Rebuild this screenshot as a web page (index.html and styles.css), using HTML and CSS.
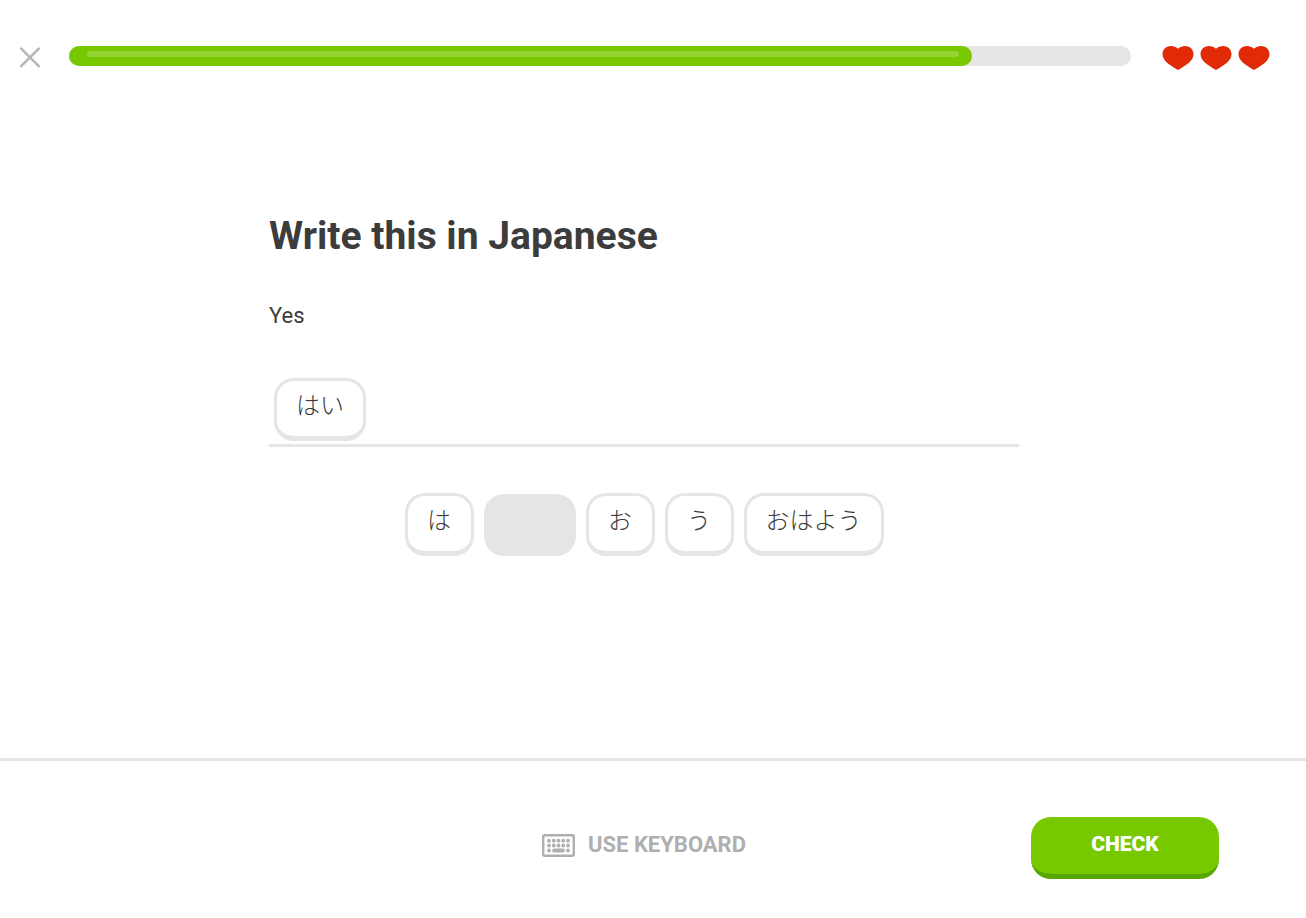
FILE: index.html
```html
<!DOCTYPE html>
<html lang="en">
<head>
<meta charset="utf-8">
<meta name="viewport" content="width=device-width, initial-scale=1">
<title>Write this in Japanese</title>
<link rel="stylesheet" href="styles.css">
</head>
<body>
<header class="topbar">
  <button class="close" type="button" aria-label="Close">
    <svg width="22" height="22" viewBox="0 0 22 22" fill="none" stroke="#b7b7b7" stroke-width="2.6" stroke-linecap="round"><path d="M2.200 2.600 19.800 20.200M19.800 2.600 2.200 20.200"/></svg>
  </button>
  <div class="progress" role="progressbar" aria-label="Lesson progress" aria-valuenow="85" aria-valuemin="0" aria-valuemax="100">
    <div class="progress-fill" style="width: 85%"><div class="progress-shine"></div></div>
  </div>
  <div class="hearts" role="img" aria-label="3 hearts">
    <svg class="heart" viewBox="0 0 32 24"><path d="M16 2.700C18 .8 20.500 0 23 0C28.500 0 31.500 4 31.500 8.200C31.500 14.500 24.500 19 16 24C7.500 19 .5 14.500 .5 8.200C.5 4 3.500 0 9 0C11.500 0 14 .8 16 2.700Z"/></svg>
    <svg class="heart" viewBox="0 0 32 24"><path d="M16 2.700C18 .8 20.500 0 23 0C28.500 0 31.500 4 31.500 8.200C31.500 14.500 24.500 19 16 24C7.500 19 .5 14.500 .5 8.200C.5 4 3.500 0 9 0C11.500 0 14 .8 16 2.700Z"/></svg>
    <svg class="heart" viewBox="0 0 32 24"><path d="M16 2.700C18 .8 20.500 0 23 0C28.500 0 31.500 4 31.500 8.200C31.500 14.500 24.500 19 16 24C7.500 19 .5 14.500 .5 8.200C.5 4 3.500 0 9 0C11.500 0 14 .8 16 2.700Z"/></svg>
  </div>
</header>
<main class="main">
  <div class="exercise">
    <h1 class="title">Write this in Japanese</h1>
    <p class="prompt">Yes</p>
    <div class="answer" lang="ja">
      <button class="chip" type="button">はい</button>
    </div>
    <div class="bank" lang="ja">
      <button class="chip" type="button">は</button>
      <button class="chip chip-used" type="button" disabled aria-label="Used word"></button>
      <button class="chip" type="button">お</button>
      <button class="chip" type="button">う</button>
      <button class="chip" type="button">おはよう</button>
    </div>
  </div>
</main>
<footer class="footer">
  <div class="footer-inner">
    <button class="keyboard" type="button">
      <svg width="33" height="23" viewBox="0 0 33 23" fill="none" stroke="#afafaf" stroke-linecap="round"><rect x="1.200" y="1.200" width="30.600" height="20.600" rx="1.500" stroke-width="2.400"/><path d="M7 6.700h.01M11.800 6.700h.01M16.500 6.700h.01M21.200 6.700h.01M26 6.700h.01M7 11.500h.01M11.800 11.500h.01M16.500 11.500h.01M21.200 11.500h.01M26 11.500h.01M7 16.500h.01M26 16.500h.01M12 16.500h9" stroke-width="3.800"/></svg>
      <span>USE KEYBOARD</span>
    </button>
    <button class="check" type="button">CHECK</button>
  </div>
</footer>
</body>
</html>
```
FILE: styles.css
```css
* { box-sizing: border-box; }

body {
  margin: 0;
  min-height: 100vh;
  display: flex;
  flex-direction: column;
  background: #fff;
  color: #3c3c3c;
  font-family: Roboto, "Noto Sans CJK JP", sans-serif;
}

button {
  margin: 0;
  padding: 0;
  border: 0;
  background: none;
  font: inherit;
  color: inherit;
  cursor: pointer;
}

.topbar {
  display: flex;
  align-items: flex-start;
  padding: 46px 36px 0 19px;
}

.close {
  display: flex;
  margin-right: 28px;
}

.progress {
  flex: 1;
  height: 20px;
  border-radius: 10px;
  background: #e5e5e5;
}

.progress-fill {
  height: 20px;
  padding: 5px 13px 0 18px;
  border-radius: 10px;
  background: #78c800;
}

.progress-shine {
  height: 6px;
  border-radius: 3px;
  background: #93d333;
}

.hearts {
  display: flex;
  gap: 6px;
  margin-left: 31px;
}

.heart {
  width: 32px;
  height: 24px;
  fill: #e12a06;
}

.main {
  flex: 1;
  padding: 142px 18px 40px 0;
}

.exercise {
  max-width: 750px;
  margin: 0 auto;
}

.title {
  margin: 0;
  font-size: 39px;
  line-height: 48px;
  font-weight: 700;
}

.prompt {
  margin: 40px 0 0;
  font-size: 22px;
  line-height: 32px;
}

.answer {
  display: flex;
  margin-top: 46px;
  padding: 0 5px 3px;
  border-bottom: 3px solid #e5e5e5;
}

.bank {
  display: flex;
  flex-wrap: wrap;
  justify-content: center;
  align-items: flex-end;
  gap: 10px;
  margin-top: 46px;
}

.chip {
  min-width: 69px;
  height: 63px;
  padding: 0 19px 10px;
  border: 3px solid #e5e5e5;
  border-bottom-width: 5px;
  border-radius: 20px;
  background: #fff;
  font-family: "Noto Sans CJK JP", sans-serif;
  font-size: 24px;
  line-height: 36px;
  font-weight: 300;
}

.chip-used {
  width: 92px;
  height: 62px;
  background: #e5e5e5;
  cursor: default;
}

.footer {
  border-top: 3px solid #e5e5e5;
  padding: 56px 87px 39px 69px;
}

.footer-inner {
  display: grid;
  grid-template-columns: 1fr auto 1fr;
  align-items: center;
}

.keyboard {
  grid-column: 2;
  display: flex;
  align-items: center;
  gap: 13px;
  padding-bottom: 6px;
  color: #afafaf;
  font-size: 22px;
  line-height: 24px;
  font-weight: 700;
}

.check {
  justify-self: end;
  width: 188px;
  height: 62px;
  padding-bottom: 4px;
  border-bottom: 5px solid #58a700;
  border-radius: 20px;
  background: #78c800;
  color: #fff;
  font-size: 21px;
  line-height: 24px;
  font-weight: 900;
}
```
